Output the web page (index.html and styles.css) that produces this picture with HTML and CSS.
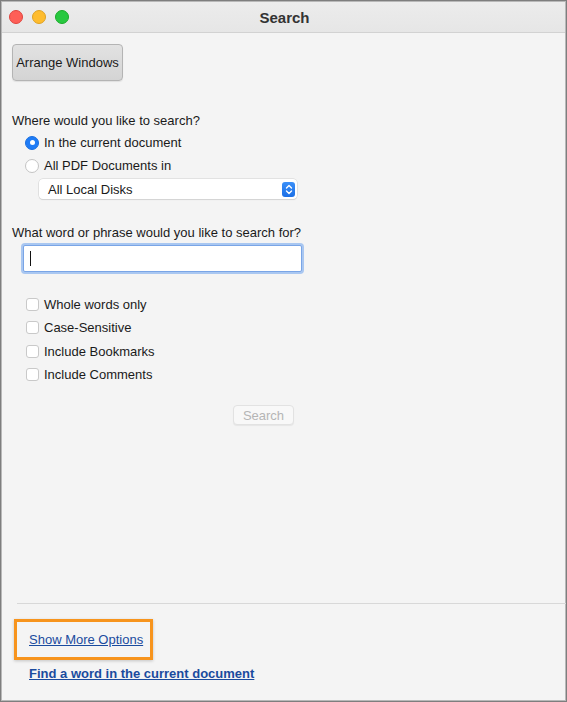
FILE: index.html
```html
<!DOCTYPE html>
<html>
<head>
<meta charset="utf-8">
<link rel="stylesheet" href="styles.css">
</head>
<body>
<div class="window">
  <div class="titlebar">
    <div class="lights">
      <span class="light red"></span>
      <span class="light yellow"></span>
      <span class="light green"></span>
    </div>
    <div class="title">Search</div>
  </div>
  <div class="content">
    <button class="arrange">Arrange Windows</button>
    <div class="heading h1">Where would you like to search?</div>
    <div class="row radio-row"><span class="radio on"></span><span>In the current document</span></div>
    <div class="row radio-row"><span class="radio"></span><span>All PDF Documents in</span></div>
    <div class="select">
      <span>All Local Disks</span>
      <span class="stepper">
        <svg width="8" height="11" viewBox="0 0 8 11"><path d="M1.5 4 L4 1.5 L6.5 4 M1.5 7 L4 9.5 L6.5 7" fill="none" stroke="#fff" stroke-width="1.4" stroke-linecap="round" stroke-linejoin="round"/></svg>
      </span>
    </div>
    <div class="heading h2">What word or phrase would you like to search for?</div>
    <div class="input"><span class="caret"></span></div>
    <div class="checks">
      <div class="row check-row"><span class="check"></span><span>Whole words only</span></div>
      <div class="row check-row"><span class="check"></span><span>Case-Sensitive</span></div>
      <div class="row check-row"><span class="check"></span><span>Include Bookmarks</span></div>
      <div class="row check-row"><span class="check"></span><span>Include Comments</span></div>
    </div>
    <div class="search-wrap"><button class="search-btn">Search</button></div>
  </div>
  <div class="footer">
    <div class="sep"></div>
    <div class="highlight"><a class="link" href="#">Show More Options</a></div>
    <a class="link bold" href="#">Find a word in the current document</a>
  </div>
</div>
</body>
</html>
```
FILE: styles.css
```css
html, body { margin: 0; padding: 0; }
body {
  font-family: "Liberation Sans", Arial, sans-serif;
  font-size: 13px;
  color: #1a1a1a;
  background: #f4f4f4;
}
.window {
  width: 567px;
  height: 702px;
  box-sizing: border-box;
  border: 1px solid #7e7e7e;
  box-shadow: inset 0 0 0 1px #b8b8b8;
  background: #f4f4f4;
  display: flex;
  flex-direction: column;
  overflow: hidden;
}
.titlebar {
  height: 30px;
  margin: 1px 1px 0 1px;
  background: linear-gradient(#ececec, #e6e6e6);
  border-bottom: 1px solid #d2d2d2;
  display: flex;
  align-items: center;
  position: relative;
  flex: none;
}
.lights { display: flex; gap: 9px; padding-left: 7px; }
.light { width: 14px; height: 14px; border-radius: 50%; display: block; box-sizing: border-box; }
.red { background: #fe5f57; border: 0.5px solid #e0443e; }
.yellow { background: #febc2e; border: 0.5px solid #dea123; }
.green { background: #28c840; border: 0.5px solid #1aab29; }
.title {
  position: absolute;
  left: 0; right: 0; top: 0; bottom: 0;
  display: flex; align-items: center; justify-content: center;
  font-weight: bold;
  font-size: 15px;
  color: #333;
  padding-left: 2px;
  pointer-events: none;
}
.content {
  flex: 1;
  padding: 11px 10px 0 11px;
  display: flex;
  flex-direction: column;
  align-items: flex-start;
}
.arrange {
  width: 111px;
  height: 37px;
  font-family: inherit;
  font-size: 13px;
  color: #1a1a1a;
  background: linear-gradient(#e2e2e2, #d4d4d4);
  border: 1px solid #b4b4b4;
  border-radius: 4px;
  box-shadow: 0 1px 1px rgba(0,0,0,0.08);
  padding: 0;
  margin: 0;
}
.heading { line-height: 16px; }
.h1 { margin-top: 32px; }
.row { display: flex; align-items: center; height: 23px; gap: 5px; }
.radio-row { padding-left: 13px; }
.h1 + .radio-row { margin-top: 2px; }
.radio {
  width: 14px; height: 14px; border-radius: 50%;
  box-sizing: border-box;
  background: #fff;
  border: 1px solid #c4c4c4;
  display: block;
  position: relative;
}
.radio.on { background: #1f7cf6; border-color: #1a6fe0; }
.radio.on::after {
  content: "";
  position: absolute;
  left: 3.5px; top: 3.5px;
  width: 5px; height: 5px; border-radius: 50%;
  background: #fff;
}
.select {
  margin-top: 2px;
  margin-left: 27px;
  width: 258px;
  height: 20px;
  box-sizing: border-box;
  background: #fff;
  border-radius: 4px;
  box-shadow: 0 0 0 0.5px #d0d0d0, 0 1px 1px rgba(0,0,0,0.12);
  display: flex;
  align-items: center;
  justify-content: space-between;
  padding: 0 2px 0 9px;
}
.stepper {
  width: 13px; height: 15px;
  border-radius: 3px;
  background: linear-gradient(#3a8ff8, #1b6fe6);
  display: flex; align-items: center; justify-content: center;
}
.h2 { margin-top: 26px; }
.input {
  margin-top: 4px;
  margin-left: 11px;
  width: 279px;
  height: 27px;
  box-sizing: border-box;
  background: #fff;
  border: 1px solid #7aa5e6;
  box-shadow: 0 0 0 2px #a9c7f1;
  border-radius: 2px;
  display: flex;
  align-items: center;
  padding-left: 6px;
}
.caret { width: 1px; height: 15px; background: #111; display: block; }
.checks { margin-top: 21px; display: flex; flex-direction: column; }
.check-row { padding-left: 14px; gap: 5px; height: 23.3px; }
.check {
  width: 13px; height: 13px;
  box-sizing: border-box;
  background: #fff;
  border: 1px solid #c9c9c9;
  border-radius: 3px;
  display: block;
}
.search-wrap { margin-top: 19px; margin-left: 221px; }
.search-btn {
  width: 61px; height: 20px;
  font-family: inherit;
  font-size: 13px;
  color: #b5b5b5;
  background: #f8f8f8;
  border: 1px solid #e2e2e2;
  border-radius: 4px;
  box-shadow: 0 1px 1px rgba(0,0,0,0.06);
  padding: 0;
}
.footer {
  flex: none;
  display: flex;
  flex-direction: column;
  align-items: flex-start;
  padding-bottom: 19px;
}
.sep {
  align-self: stretch;
  height: 1px;
  background: #d8d8d8;
  margin-left: 16px;
}
.highlight {
  margin-top: 15px;
  margin-left: 13px;
  width: 139px;
  height: 41px;
  box-sizing: border-box;
  border: 3px solid #f7941d;
  box-shadow: 0 1px 3px rgba(0,0,0,0.2);
  display: flex;
  align-items: center;
  padding-left: 12px;
}
.link {
  color: #1a4b9e;
  text-decoration: underline;
  font-size: 13px;
  line-height: 16px;
}
.footer > .link { margin-top: 6px; margin-left: 28px; }
.bold { font-weight: bold; }
```
